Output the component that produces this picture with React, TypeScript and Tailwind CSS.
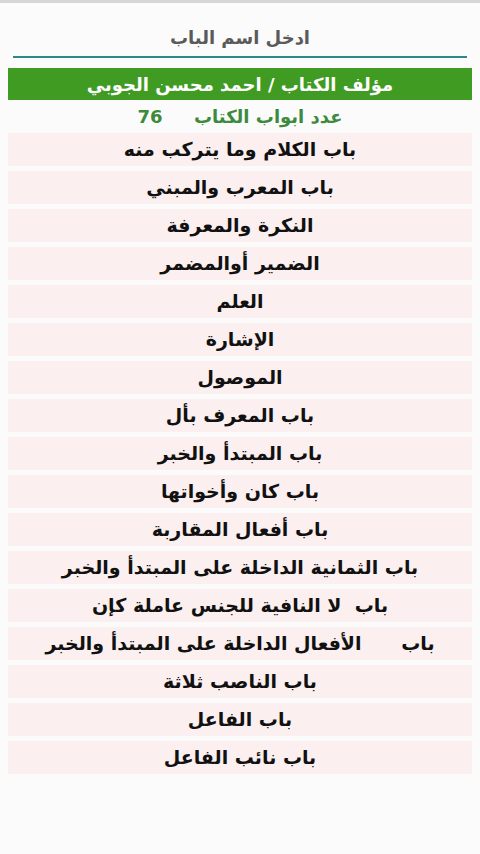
import React from "react";

const items = [
  "باب الكلام وما يتركب منه",
  "باب المعرب والمبني",
  "النكرة والمعرفة",
  "الضمير أوالمضمر",
  "العلم",
  "الإشارة",
  "الموصول",
  "باب المعرف بأل",
  "باب المبتدأ والخبر",
  "باب كان وأخواتها",
  "باب أفعال المقاربة",
  "باب الثمانية الداخلة على المبتدأ والخبر",
  "باب  لا النافية للجنس عاملة كإن",
  "باب      الأفعال الداخلة على المبتدأ والخبر",
  "باب الناصب ثلاثة",
  "باب الفاعل",
  "باب نائب الفاعل",
];

export default function App() {
  return (
    <div
      dir="rtl"
      className="w-[480px] h-[854px] bg-[#fbfbfb] flex flex-col"
      style={{ fontFamily: '"DejaVu Sans", sans-serif' }}
    >
      <div className="h-[3px] bg-[#d6d6d6]" />
      <div className="px-[13px]">
        <div className="h-[53px] flex items-end justify-center pb-[5px] text-[18px] font-bold text-[#5a5a5a]">
          ادخل اسم الباب
        </div>
        <div className="h-[2px] bg-[#2f8888]" />
      </div>
      <div className="px-[8px] pt-[10px] flex flex-col">
        <div className="h-[32px] bg-[#3f9b22] flex items-center justify-center text-white text-[18px] font-bold">
          مؤلف الكتاب / احمد محسن الجوبي
        </div>
        <div className="h-[33px] flex items-center justify-center text-[#3c8a3c] text-[18px] font-bold whitespace-pre">
          {"عدد ابواب الكتاب     76"}
        </div>
        <div className="flex flex-col gap-[5px]">
          {items.map((t, i) => (
            <div
              key={i}
              className="h-[33px] bg-[#fbefef] flex items-center justify-center text-[#111] text-[19px] font-bold whitespace-pre"
            >
              {t}
            </div>
          ))}
        </div>
      </div>
    </div>
  );
}
